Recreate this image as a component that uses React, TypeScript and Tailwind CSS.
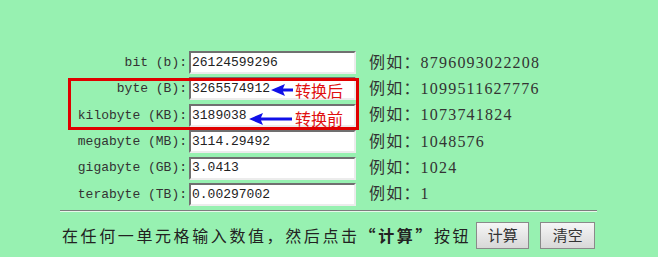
const rows = [
  { label: 'bit (b):', value: '26124599296', example: '8796093022208' },
  { label: 'byte (B):', value: '3265574912', example: '1099511627776' },
  { label: 'kilobyte (KB):', value: '3189038', example: '1073741824' },
  { label: 'megabyte (MB):', value: '3114.29492', example: '1048576' },
  { label: 'gigabyte (GB):', value: '3.0413', example: '1024' },
  { label: 'terabyte (TB):', value: '0.00297002', example: '1' },
]

function LeftArrow({ width }: { width: number }) {
  return (
    <svg width={width} height={12} viewBox={`0 0 ${width} 12`}>
      <polygon points={`0,6 14,0 12,4.5 ${width},4.5 ${width},7.5 12,7.5 14,12`} fill="#1010e8" />
    </svg>
  )
}

export default function App() {
  return (
    <div
      className="relative w-[658px] h-[257px] overflow-hidden bg-[#97f1b1] text-[#2a2a2a]"
      style={{ fontFamily: '"Liberation Serif", "Noto Sans CJK SC", serif' }}
    >
      <div className="flex flex-col gap-[3.4px] pt-[51px]">
        {rows.map((r) => (
          <div key={r.label} className="flex items-center h-[23px]">
            <span className="w-[187px] text-right text-[13px] font-['Liberation_Mono',monospace] text-[#333]">
              {r.label}
            </span>
            <div className="ml-[2px] w-[167px] h-[23px] flex items-center bg-white border-2 border-t-[#707070] border-l-[#707070] border-b-[#ececec] border-r-[#ececec] pl-[1px] text-[13px] font-['Liberation_Mono',monospace] text-[#222]">
              {r.value}
            </div>
            <span className="ml-[13px] text-[16px] tracking-[1.2px] text-[#333]">
              例如：{r.example}
            </span>
          </div>
        ))}
      </div>

      <div className="ml-[60px] mt-[4px] w-[537px] border-t border-b border-t-[#7d7d7d] border-b-[#e6f8ea]" />

      <div className="flex items-center ml-[62px] mt-[10px] h-[27px]">
        <span className="text-[16px] tracking-[2.6px] text-[#222]" style={{ fontFamily: '"Noto Sans CJK SC", sans-serif' }}>
          在任何一单元格输入数值，然后点击<b>“计算”</b>按钮
        </span>
        <button className="ml-[5px] w-[53px] h-[27px] border border-[#8a8a8a] bg-gradient-to-b from-[#f6f6f6] to-[#d8d8d8] text-[15px] text-[#333]" style={{ fontFamily: '"Noto Sans CJK SC", sans-serif' }}>
          计算
        </button>
        <button className="ml-[11px] w-[55px] h-[27px] border border-[#8a8a8a] bg-gradient-to-b from-[#f6f6f6] to-[#d8d8d8] text-[15px] text-[#333]" style={{ fontFamily: '"Noto Sans CJK SC", sans-serif' }}>
          清空
        </button>
      </div>

      {/* annotation: red box, arrows and labels */}
      <div className="absolute left-[68px] top-[78px] w-[291px] h-[52px] border-[3px] border-[#e00000]" />
      <div className="absolute left-[271px] top-[84px]">
        <LeftArrow width={22} />
      </div>
      <div className="absolute left-[249px] top-[113px]">
        <LeftArrow width={43} />
      </div>
      <span
        className="absolute left-[295px] top-[79px] text-[16px] leading-[22px] text-[#e01010]"
        style={{ fontFamily: '"Noto Sans CJK SC", sans-serif' }}
      >
        转换后
      </span>
      <span
        className="absolute left-[295px] top-[107px] text-[16px] leading-[22px] text-[#e01010]"
        style={{ fontFamily: '"Noto Sans CJK SC", sans-serif' }}
      >
        转换前
      </span>
    </div>
  )
}
